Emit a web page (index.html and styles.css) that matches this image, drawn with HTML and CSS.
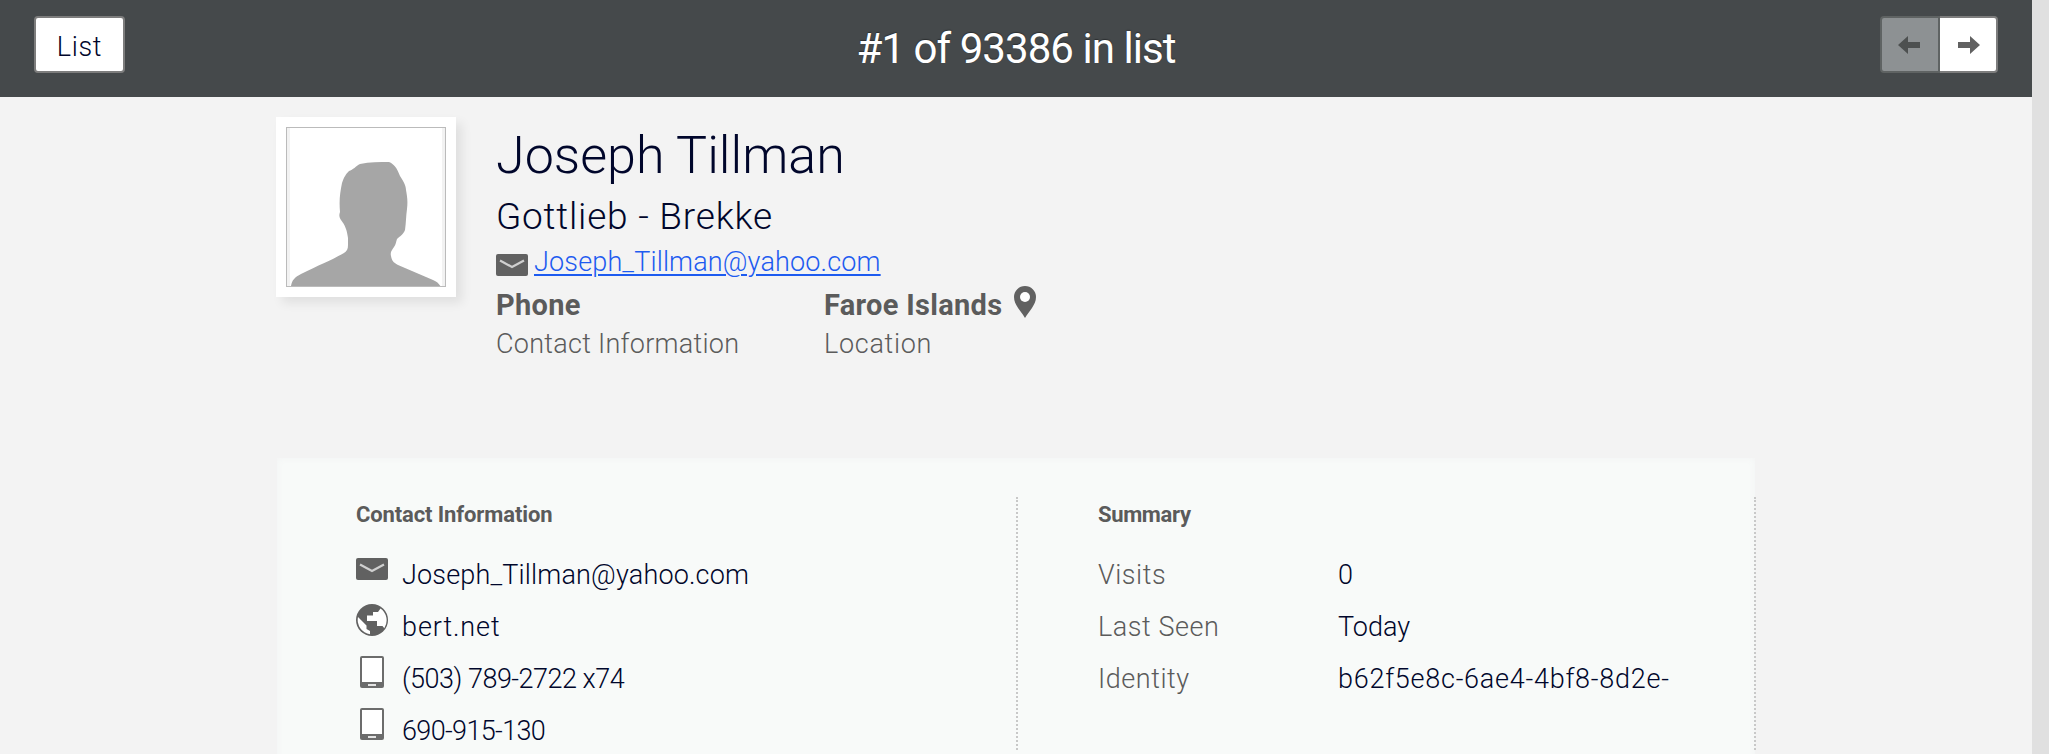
FILE: index.html
```
<!DOCTYPE html>
<html lang="en">
<head>
<meta charset="utf-8">
<title>Joseph Tillman</title>
<link rel="stylesheet" href="styles.css">
</head>
<body>
<svg class="defs" width="0" height="0">
  <symbol id="mail" viewBox="0 0 32 22"><rect width="32" height="22" rx="2" fill="#616161"/><path d="M4 6.500l12 6.500 12-6.500" fill="none" stroke="#cfcfcf" stroke-width="2.200"/></symbol>
  <symbol id="globe" viewBox="0 0 32 32"><circle cx="16" cy="16" r="16" fill="#616161"/><path d="M24.500 4.500L22 8h-5v3.500h-6V17h10v5h5.500l1.800 2.200A14.500 14.500 0 0 0 24.500 4.500zM2 13l8.500 8.500V25l3.500 2v3.300A14.500 14.500 0 0 1 2 13z" fill="#fff"/></symbol>
  <symbol id="tablet" viewBox="0 0 32 32"><rect x="4" width="24" height="32" rx="2" fill="#6c6c6c"/><rect x="6" y="2" width="20" height="24" fill="#fff"/><rect x="12" y="28" width="8" height="2" fill="#e4e4e4"/></symbol>
</svg>
<div class="page">
  <header class="bar">
    <button class="btn list">List</button>
    <h1 class="title">#1 of 93386 in list</h1>
    <div class="nav">
      <button class="btn prev"><svg width="22" height="18" viewBox="0 0 22 18"><path d="M0 9L10 0v6h12v6H10v6z" fill="#4d5050"/></svg></button>
      <button class="btn next"><svg width="22" height="18" viewBox="0 0 22 18"><path d="M22 9L12 0v6H0v6h12v6z" fill="#616161"/></svg></button>
    </div>
  </header>
  <section class="profile">
    <div class="photo"><svg viewBox="0 0 158 158" width="158" height="158"><path d="M0 0h3v158H0zM155 0h3v158h-3z" fill="#f2f2f2"/><path d="M4 158c1-6 4-9 10-12 18-9 31-14 43-21 3-2 4-4 4-8v-7c-1-8-3-13-7-18-2-3-2-5-1-8-1-12 0-19 2-29 2-6 4-9 7-12 4-1 7-5 11-7 10-2 19-2 29-2 5 2 8 6 11 14 3 5 6 9 6 14 1 6 2 10 1 19-1 7-1 14-2 21-2 5-5 6-8 9-1 3-1 5-3 8-2 3-4 5-3 9 1 5 2 6 7 9l35 15c5 2 7 5 9 9z" fill="#a6a6a6"/></svg></div>
    <div class="who">
      <h2 class="name">Joseph Tillman</h2>
      <div class="company">Gottlieb - Brekke</div>
      <div class="email"><svg width="32" height="22"><use href="#mail"/></svg><a href="#">Joseph_Tillman@yahoo.com</a></div>
      <div class="facts">
        <div class="fact"><strong>Phone</strong><span class="label">Contact Information</span></div>
        <div class="fact"><div class="place"><strong>Faroe Islands</strong><svg width="22" height="32" viewBox="0 0 22 32"><path d="M11 0a11 11 0 0 1 11 11c0 8-7 14-11 21C7 25 0 19 0 11A11 11 0 0 1 11 0z" fill="#616161"/><circle cx="11" cy="11" r="5" fill="#fff"/></svg></div><span class="label location">Location</span></div>
      </div>
    </div>
  </section>
  <main class="card">
    <section class="col">
      <h3>Contact Information</h3>
      <div class="row"><svg class="ico" width="32" height="22"><use href="#mail"/></svg><span class="mailtext">Joseph_Tillman@yahoo.com</span></div>
      <div class="row"><svg class="ico" width="32" height="32"><use href="#globe"/></svg><span class="site">bert.net</span></div>
      <div class="row"><svg class="ico" width="32" height="32"><use href="#tablet"/></svg><span class="tel">(503) 789-2722 x74</span></div>
      <div class="row"><svg class="ico" width="32" height="32"><use href="#tablet"/></svg><span class="tel mobile">690-915-130</span></div>
    </section>
    <section class="col">
      <h3 class="summary">Summary</h3>
      <div class="row"><span class="key">Visits</span><span>0</span></div>
      <div class="row"><span class="key">Last Seen</span><span>Today</span></div>
      <div class="row"><span class="key">Identity</span><span class="uuid">b62f5e8c-6ae4-4bf8-8d2e-</span></div>
    </section>
  </main>
</div>
</body>
</html>
```
FILE: styles.css
```
* { box-sizing: border-box; }
body { margin: 0; height: 754px; overflow: hidden; background: #e0e0e0; font-family: Roboto, sans-serif; font-weight: 300; font-size: 27px; color: #00062b; }
h1, h2, h3 { margin: 0; font-weight: inherit; }
.defs { display: block; height: 0; }
.page { width: 2032px; height: 754px; overflow: hidden; background: #f3f3f3; white-space: nowrap; }
.bar { height: 97px; padding: 16px 34px 24px; background: #45494b; display: grid; grid-template-columns: 1fr auto 1fr; }
.btn { height: 57px; padding: 1px 0 0; border: 2px solid #7d7d7d; border-radius: 4px; background: #fff; font: inherit; color: inherit; display: flex; align-items: center; justify-content: center; }
.list { width: 91px; padding-top: 4px; letter-spacing: .7px; }
.title { font-size: 42px; font-weight: 400; line-height: 57px; letter-spacing: -.95px; color: #fff; padding-top: 4px; height: 57px; text-shadow: 0 -1px 1px #2c2f31; }
.nav { display: flex; justify-content: flex-end; }
.prev { width: 60px; padding-right: 2px; border-color: #5f6363; background: #8d9193; border-radius: 4px 0 0 4px; }
.next { width: 58px; padding-left: 2px; border-left: 0; border-radius: 0 4px 4px 0; }
.profile { display: flex; gap: 40px; padding: 20px 0 0 276px; height: 363px; }
.photo { width: 180px; height: 180px; padding: 10px; background: #fff; box-shadow: 6px 6px 10px rgba(0,0,0,.08); }
.photo svg { display: block; box-sizing: content-box; border: 1px solid #bbb; }
.who { padding-top: 9px; }
.name { font-size: 52px; line-height: 60px; }
.company { margin-top: 6px; font-size: 37px; line-height: 50px; letter-spacing: .78px; }
.email { display: flex; align-items: center; gap: 6px; line-height: 40px; letter-spacing: .15px; }
.email svg { margin-top: 5px; }
.email a { color: #1d5bf0; text-underline-offset: 3px; text-decoration-thickness: 2px; }
.facts { display: grid; grid-template-columns: 328px 1fr; margin-top: 4px; color: #5b5b5b; }
.fact { display: flex; flex-direction: column; }
.fact strong { font-size: 29px; line-height: 38px; font-weight: 700; letter-spacing: .3px; }
.label { line-height: 40px; letter-spacing: .27px; }
.location { letter-spacing: .7px; }
.place { display: flex; gap: 12px; height: 38px; }
.card { margin-left: 277px; width: 1479px; height: 294px; padding: 37px 0 0 1px; display: grid; grid-template-columns: 740px 738px; position: relative; z-index: 0; }
.card::before { content: ""; position: absolute; z-index: -1; inset: -2px 1px -20px 0; background: #f8faf9; box-shadow: inset 0 0 7px #f2f3f3; }
.col { height: 253px; padding-left: 78px; border-right: 2px dotted #c8c8c8; }
.col + .col { padding-left: 80px; }
h3 { height: 52px; font-size: 22px; line-height: 35px; font-weight: 700; letter-spacing: -.12px; color: #5b5b5b; }
.summary { letter-spacing: -.35px; }
.row { height: 52px; line-height: 52px; display: flex; }
.ico { margin: 3px 14px 0 0; }
.row:nth-child(2) .ico { margin-top: 9px; }
.mailtext { letter-spacing: .17px; }
.site { letter-spacing: .9px; }
.tel { letter-spacing: -.5px; }
.mobile { letter-spacing: -.65px; }
.key { width: 240px; letter-spacing: .55px; color: #5b5b5b; }
.uuid { letter-spacing: .74px; }
```
